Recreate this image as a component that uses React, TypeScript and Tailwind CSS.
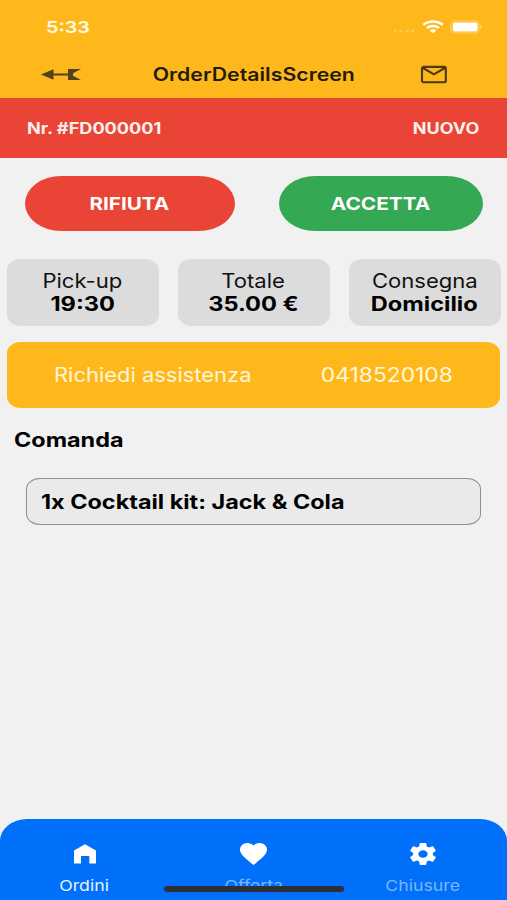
import type { ReactNode } from "react";
import { clsx } from "clsx";

function Wide({ className, children }: { className?: string; children: ReactNode }) {
  return <span className={clsx("inline-block whitespace-nowrap", className)}>{children}</span>;
}

function StatusBar() {
  return (
    <div className="flex h-[54px] items-center justify-between pl-[46px] pr-[24px]">
      <Wide className="mt-px origin-left scale-x-[1.2] text-[16.5px] font-semibold text-[#fffbe8]">5:33</Wide>
      <div className="flex items-center">
        <svg width="24" height="4" viewBox="0 0 24 4" className="mr-[6px] mt-[8px]" fill="#ffcb57">
          <ellipse cx="3" cy="2" rx="1.7" ry="1.2" />
          <ellipse cx="9" cy="2" rx="1.7" ry="1.2" />
          <ellipse cx="15" cy="2" rx="1.7" ry="1.2" />
          <ellipse cx="20.5" cy="2" rx="1.7" ry="1.2" />
        </svg>
        <svg width="22" height="14" viewBox="0 0 22 14" fill="none" stroke="#fff" strokeWidth="2.4">
          <path d="M1.3 4.8C6.6 .4 15.4 .4 20.7 4.8" />
          <path d="M4.9 8.1c3.4-2.9 8.8-2.9 12.2 0" />
          <path d="M11 13.2 7.7 10.4c1.8-1.4 4.8-1.4 6.6 0Z" fill="#fff" stroke="none" />
        </svg>
        <svg width="33" height="14" viewBox="0 0 33 14" className="ml-[6px]">
          <rect x="1" y="1" width="28" height="12" rx="4" fill="none" stroke="#ffd06a" strokeWidth="1.2" />
          <rect x="2.8" y="2.6" width="24.8" height="9" rx="2" fill="#fff" />
          <path d="M30.4 4.8c2 .8 2 3.6 0 4.4Z" fill="#ffd684" />
        </svg>
      </div>
    </div>
  );
}

function NavBar() {
  return (
    <div className="grid h-[44px] grid-cols-[141px_1fr_141px] items-center pb-[3px]">
      <svg width="40" height="14" viewBox="0 0 40 14" className="ml-[41px]" fill="#55411a">
        <path d="M0 6.5 12.5 1.2v10.6Z" />
        <path d="M12 5.4h15V1h13L32 5.2V7.8L40 12H27V7.6H12Z" />
      </svg>
      <Wide className="justify-self-center scale-x-[1.165] text-[18.3px] font-semibold text-[#241c08]">OrderDetailsScreen</Wide>
      <svg width="28" height="19" viewBox="0 0 28 19" className="ml-[54px]" fill="none" stroke="#493a12" strokeWidth="2.1">
        <rect x="2" y="1.9" width="23.8" height="15.4" rx="1.6" />
        <path d="m3 3 10.9 6.4L24.8 3" />
      </svg>
    </div>
  );
}

function InfoCard({ label, value }: { label: string; value: string }) {
  return (
    <div className="flex h-[67px] flex-1 flex-col items-center justify-center rounded-[14px/11px] bg-[#dcdcdc] pr-px pt-[2px] text-[19.5px] leading-[23px] text-[#111]">
      <Wide className="scale-x-[1.13]">{label}</Wide>
      <Wide className="scale-x-[1.21] font-bold text-black">{value}</Wide>
    </div>
  );
}

function TabItem({ label, active, children }: { label: string; active?: boolean; children: ReactNode }) {
  return (
    <div className="flex flex-1 flex-col items-center pt-[23px]">
      <div className="flex h-[23px] items-center justify-center">{children}</div>
      <Wide className={clsx("mt-[11px] scale-x-[1.18] text-[15px] leading-[20px]", active ? "text-[#e8f3ff]" : "text-[#7cb6ff]")}>
        {label}
      </Wide>
    </div>
  );
}

function TabBar() {
  return (
    <nav className="relative flex h-[81px] rounded-t-[27px_22px] bg-[#0070fb]">
      <TabItem label="Ordini" active>
        <svg width="22" height="20" viewBox="0 0 22 20" fill="#fff">
          <path d="M0 6.6 11 .2l11 6.4v12.8h-6.7v-7.5H7v7.5H0Z" />
        </svg>
      </TabItem>
      <TabItem label="Offerta">
        <svg width="27" height="22" viewBox="2 3 20 18.35" preserveAspectRatio="none" fill="#fff">
          <path d="m12 21.35-1.45-1.32C5.4 15.36 2 12.28 2 8.5 2 5.42 4.42 3 7.5 3c1.74 0 3.41.81 4.5 2.09C13.09 3.81 14.76 3 16.5 3 19.58 3 22 5.42 22 8.5c0 3.78-3.4 6.86-8.55 11.54Z" />
        </svg>
      </TabItem>
      <TabItem label="Chiusure">
        <svg width="26" height="22" viewBox="2.2 2 19.6 20" preserveAspectRatio="none" fill="#fff">
          <path d="M19.43 12.98c.04-.32.07-.64.07-.98s-.03-.66-.07-.98l2.11-1.65c.19-.15.24-.42.12-.64l-2-3.46c-.12-.22-.39-.3-.61-.22l-2.49 1c-.52-.4-1.08-.73-1.69-.98l-.38-2.65C14.46 2.18 14.25 2 14 2h-4c-.25 0-.46.18-.49.42l-.38 2.65c-.61.25-1.17.59-1.69.98l-2.49-1c-.23-.09-.49 0-.61.22l-2 3.46c-.13.22-.07.49.12.64l2.11 1.65c-.04.32-.07.65-.07.98s.03.66.07.98l-2.11 1.65c-.19.15-.24.42-.12.64l2 3.46c.12.22.39.3.61.22l2.49-1c.52.4 1.08.73 1.69.98l.38 2.65c.03.24.24.42.49.42h4c.25 0 .46-.18.49-.42l.38-2.65c.61-.25 1.17-.59 1.69-.98l2.49 1c.23.09.49 0 .61-.22l2-3.46c.12-.22.07-.49-.12-.64ZM12 15.5c-1.93 0-3.5-1.57-3.5-3.5s1.57-3.5 3.5-3.5 3.5 1.57 3.5 3.5-1.57 3.5-3.5 3.5Z" />
        </svg>
      </TabItem>
      <div className="absolute bottom-[8.5px] left-[164px] h-[5.5px] w-[180px] rounded-full bg-[#2c3138]" />
    </nav>
  );
}

export default function App() {
  return (
    <div className="flex h-[900px] w-[507px] flex-col overflow-hidden bg-[#f1f1f1] font-['Inter',sans-serif]">
      <header className="bg-[#ffb81c]">
        <StatusBar />
        <NavBar />
      </header>
      <div className="flex h-[60px] shrink-0 items-center justify-between bg-[#e94435] pl-[27px] pr-[28px] pt-px text-[15.5px] font-bold text-[#fff0ee]">
        <Wide className="origin-left scale-x-[1.17]">Nr. #FD000001</Wide>
        <Wide className="origin-right scale-x-[1.16]">NUOVO</Wide>
      </div>
      <main className="flex-1">
        <div className="flex justify-between pl-[25px] pr-[24px] pt-[17.5px] text-[17.8px] font-bold text-white">
          <button className="h-[55px] w-[210px] rounded-[37px/28px] bg-[#e94435] pr-[2px] pt-[2px]">
            <Wide className="scale-x-[1.16]">RIFIUTA</Wide>
          </button>
          <button className="h-[55px] w-[204px] rounded-[37px/28px] bg-[#35a853] pt-[2px]">
            <Wide className="scale-x-[1.17]">ACCETTA</Wide>
          </button>
        </div>
        <div className="mt-[28px] flex gap-[19px] pl-[7px] pr-[6px]">
          <InfoCard label="Pick-up" value="19:30" />
          <InfoCard label="Totale" value="35.00 €" />
          <InfoCard label="Consegna" value="Domicilio" />
        </div>
        <div className="mx-[7px] mt-[16.5px] flex h-[65.5px] items-center justify-between rounded-[14px/11px] bg-[#ffb81c] px-[47px] pt-[2px] text-[19.5px] text-[#fff6dc]">
          <Wide className="origin-left scale-x-[1.125]">Richiedi assistenza</Wide>
          <Wide className="origin-right scale-x-[1.17]">0418520108</Wide>
        </div>
        <h2 className="ml-[14px] mt-[20px] text-[19.5px] font-bold leading-[24px] text-black">
          <Wide className="origin-left scale-x-[1.2]">Comanda</Wide>
        </h2>
        <div className="mx-[26px] mt-[26px] flex h-[47px] items-center rounded-[14px/11px] border border-[#8f8f8f] bg-[#eaeaea] pl-[14px] pt-[3px] text-[19.5px] font-bold text-black">
          <Wide className="origin-left scale-x-[1.2]">1x Cocktail kit: Jack &amp; Cola</Wide>
        </div>
      </main>
      <TabBar />
    </div>
  );
}
